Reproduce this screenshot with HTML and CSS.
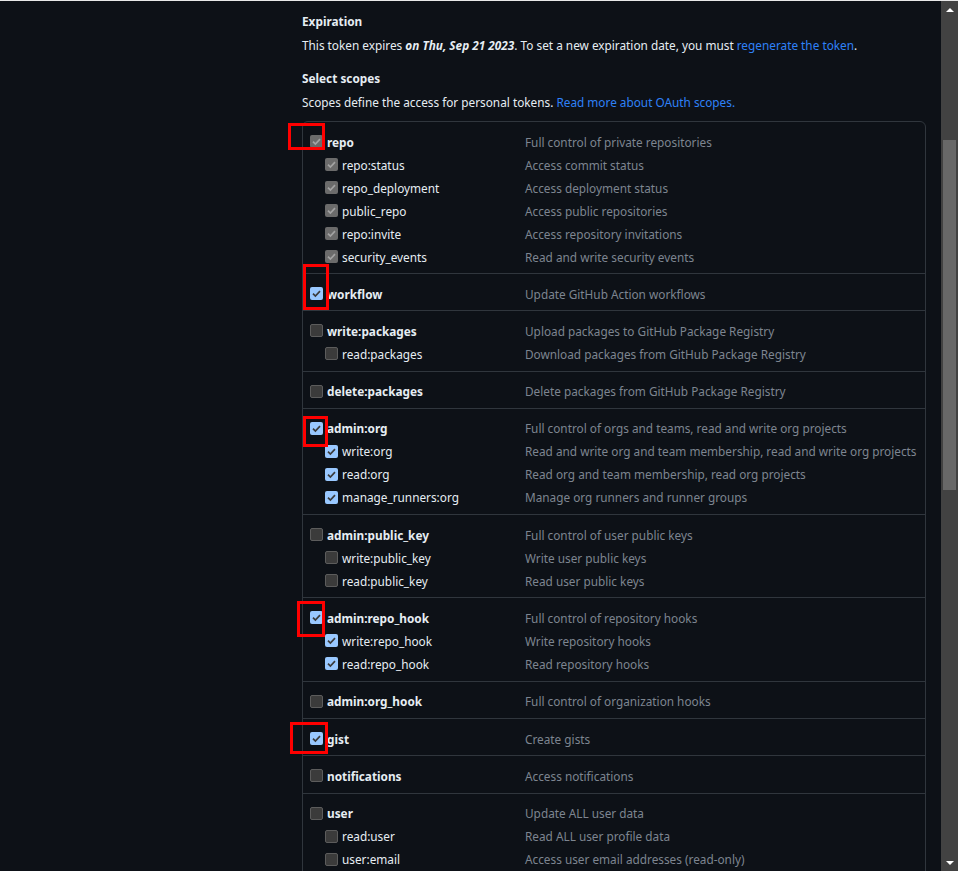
FILE: index.html
```html
<!doctype html>
<html lang="en">
    <head>
        <meta charset="UTF-8" />
        <meta name="viewport" content="width=device-width, initial-scale=1.0" />
        <title>New personal access token</title>
        <link rel="stylesheet" href="styles.css">
    </head>
    <body>
        <div class="topline"></div>
        <div class="window">
            <div class="main">
                <div class="content">
                    <h3 class="title">Expiration</h3>
                    <p class="note">
                        This token expires <strong><em>on Thu, Sep 21 2023</em></strong>. To set a new expiration date, you must
                        <a href="#">regenerate the token</a>.
                    </p>

                    <h3 class="title">Select scopes</h3>
                    <p class="note last">
                        Scopes define the access for personal tokens.
                        <a href="#">Read more about OAuth scopes.</a>
                    </p>

                    <div class="scopes">
                        <!-- annotation boxes -->
                        <span class="mark m-repo"></span>
                        <span class="mark m-workflow"></span>
                        <span class="mark m-org"></span>
                        <span class="mark m-hook"></span>
                        <span class="mark m-gist"></span>

                        <div class="group">
                            <div class="row">
                                <label class="name"><span class="cb on off"></span>repo</label>
                                <span class="desc">Full control of private repositories</span>
                            </div>
                            <div class="row sub">
                                <label class="name"><span class="cb on off"></span>repo:status</label>
                                <span class="desc">Access commit status</span>
                            </div>
                            <div class="row sub">
                                <label class="name"><span class="cb on off"></span>repo_deployment</label>
                                <span class="desc">Access deployment status</span>
                            </div>
                            <div class="row sub">
                                <label class="name"><span class="cb on off"></span>public_repo</label>
                                <span class="desc">Access public repositories</span>
                            </div>
                            <div class="row sub">
                                <label class="name"><span class="cb on off"></span>repo:invite</label>
                                <span class="desc">Access repository invitations</span>
                            </div>
                            <div class="row sub">
                                <label class="name"><span class="cb on off"></span>security_events</label>
                                <span class="desc">Read and write security events</span>
                            </div>
                        </div>

                        <div class="group">
                            <div class="row">
                                <label class="name"><span class="cb on"></span>workflow</label>
                                <span class="desc">Update GitHub Action workflows</span>
                            </div>
                        </div>

                        <div class="group">
                            <div class="row">
                                <label class="name"><span class="cb"></span>write:packages</label>
                                <span class="desc">Upload packages to GitHub Package Registry</span>
                            </div>
                            <div class="row sub">
                                <label class="name"><span class="cb"></span>read:packages</label>
                                <span class="desc">Download packages from GitHub Package Registry</span>
                            </div>
                        </div>

                        <div class="group">
                            <div class="row">
                                <label class="name"><span class="cb"></span>delete:packages</label>
                                <span class="desc">Delete packages from GitHub Package Registry</span>
                            </div>
                        </div>

                        <div class="group">
                            <div class="row">
                                <label class="name"><span class="cb on"></span>admin:org</label>
                                <span class="desc">Full control of orgs and teams, read and write org projects</span>
                            </div>
                            <div class="row sub">
                                <label class="name"><span class="cb on"></span>write:org</label>
                                <span class="desc">Read and write org and team membership, read and write org projects</span>
                            </div>
                            <div class="row sub">
                                <label class="name"><span class="cb on"></span>read:org</label>
                                <span class="desc">Read org and team membership, read org projects</span>
                            </div>
                            <div class="row sub">
                                <label class="name"><span class="cb on"></span>manage_runners:org</label>
                                <span class="desc">Manage org runners and runner groups</span>
                            </div>
                        </div>

                        <div class="group">
                            <div class="row">
                                <label class="name"><span class="cb"></span>admin:public_key</label>
                                <span class="desc">Full control of user public keys</span>
                            </div>
                            <div class="row sub">
                                <label class="name"><span class="cb"></span>write:public_key</label>
                                <span class="desc">Write user public keys</span>
                            </div>
                            <div class="row sub">
                                <label class="name"><span class="cb"></span>read:public_key</label>
                                <span class="desc">Read user public keys</span>
                            </div>
                        </div>

                        <div class="group">
                            <div class="row">
                                <label class="name"><span class="cb on"></span>admin:repo_hook</label>
                                <span class="desc">Full control of repository hooks</span>
                            </div>
                            <div class="row sub">
                                <label class="name"><span class="cb on"></span>write:repo_hook</label>
                                <span class="desc">Write repository hooks</span>
                            </div>
                            <div class="row sub">
                                <label class="name"><span class="cb on"></span>read:repo_hook</label>
                                <span class="desc">Read repository hooks</span>
                            </div>
                        </div>

                        <div class="group">
                            <div class="row">
                                <label class="name"><span class="cb"></span>admin:org_hook</label>
                                <span class="desc">Full control of organization hooks</span>
                            </div>
                        </div>

                        <div class="group">
                            <div class="row">
                                <label class="name"><span class="cb on"></span>gist</label>
                                <span class="desc">Create gists</span>
                            </div>
                        </div>

                        <div class="group">
                            <div class="row">
                                <label class="name"><span class="cb"></span>notifications</label>
                                <span class="desc">Access notifications</span>
                            </div>
                        </div>

                        <div class="group">
                            <div class="row">
                                <label class="name"><span class="cb"></span>user</label>
                                <span class="desc">Update ALL user data</span>
                            </div>
                            <div class="row sub">
                                <label class="name"><span class="cb"></span>read:user</label>
                                <span class="desc">Read ALL user profile data</span>
                            </div>
                            <div class="row sub">
                                <label class="name"><span class="cb"></span>user:email</label>
                                <span class="desc">Access user email addresses (read-only)</span>
                            </div>
                        </div>
                    </div>
                </div>
            </div>

            <!-- fake browser scrollbar -->
            <div class="scrollbar">
                <span class="arrow up"></span>
                <div class="track"><div class="thumb"></div></div>
                <span class="arrow down"></span>
            </div>
        </div>
    </body>
</html>
```

FILE: styles.css
```css
html,
body {
    height: 100%;
    overflow: hidden;
}

body {
    margin: 0;
    display: flex;
    flex-direction: column;
    background: #0d1117;
    color: #e6edf3;
    font-family: "Noto Sans", "Open Sans", sans-serif;
    font-size: 11.8px;
}

.topline {
    height: 1px;
    background: #e8e8e8;
    flex: none;
}

.window {
    flex: 1;
    display: flex;
    min-height: 0;
}

.main {
    flex: 1;
    overflow: hidden;
}

.content {
    margin-left: 302px;
    margin-right: 15px;
    padding-top: 9px;
}

.title {
    margin: 0 0 1px;
    font-size: 11.8px;
    font-weight: 700;
    line-height: 23px;
}

.note {
    margin: 0 0 10px;
    line-height: 23px;
}

.note.last {
    margin-bottom: 7px;
}

.note a {
    color: #2f81f7;
    text-decoration: none;
}

/* scopes list */

.scopes {
    position: relative;
    border: 1px solid #30363d;
    border-radius: 6px;
}

.group {
    padding: 8px 0 5.3px;
    border-top: 1px solid #30363d;
}

.group:first-of-type {
    border-top: none;
    padding-bottom: 5px;
}

.row {
    display: flex;
    align-items: center;
    height: 23px;
    padding-left: 7px;
}

.name {
    width: 215px;
    flex: none;
    display: flex;
    align-items: center;
    font-weight: 700;
}

.row.sub .name {
    padding-left: 15px;
    width: 200px;
    font-weight: 400;
}

.desc {
    color: #7d8590;
    white-space: nowrap;
}

/* checkboxes */

.cb {
    width: 13px;
    height: 13px;
    box-sizing: border-box;
    margin-right: 4px;
    border-radius: 2px;
    border: 1px solid #5c5c5c;
    background: #3b3b3b;
    flex: none;
}

.cb.on {
    border: none;
    background: #99c8ff url("data:image/svg+xml;utf8,<svg xmlns='http://www.w3.org/2000/svg' viewBox='0 0 13 13'><path d='M3 6.6 5.4 9 10 4.2' fill='none' stroke='%233b3b3b' stroke-width='1.7'/></svg>") center / 13px 13px no-repeat;
}

.cb.on.off {
    background: #6b6b6b url("data:image/svg+xml;utf8,<svg xmlns='http://www.w3.org/2000/svg' viewBox='0 0 13 13'><path d='M3 6.6 5.4 9 10 4.2' fill='none' stroke='%23a3a3a3' stroke-width='1.7'/></svg>") center / 13px 13px no-repeat;
}

/* red annotation boxes */

.mark {
    position: absolute;
    box-sizing: border-box;
    border: 3px solid #ff0000;
    z-index: 2;
}

.m-repo {
    left: -15px;
    top: 1px;
    width: 37px;
    height: 27px;
}

.m-workflow {
    left: 0;
    top: 142px;
    width: 26px;
    height: 46px;
}

.m-org {
    left: 0;
    top: 294px;
    width: 25px;
    height: 31px;
}

.m-hook {
    left: -6px;
    top: 479px;
    width: 28px;
    height: 36px;
}

.m-gist {
    left: -13px;
    top: 600px;
    width: 38px;
    height: 32px;
}

/* scrollbar */

.scrollbar {
    width: 17px;
    flex: none;
    display: flex;
    flex-direction: column;
    background: #424242;
}

.arrow {
    height: 17px;
    flex: none;
    display: flex;
    align-items: center;
    justify-content: center;
}

.arrow::before {
    content: "";
    border-left: 4px solid transparent;
    border-right: 4px solid transparent;
}

.arrow.up::before {
    border-bottom: 4px solid #ffffff;
}

.arrow.down::before {
    border-top: 4px solid #ffffff;
}

.track {
    flex: 1;
    padding: 122px 2px 0;
}

.thumb {
    height: 350px;
    background: #686868;
}
```
